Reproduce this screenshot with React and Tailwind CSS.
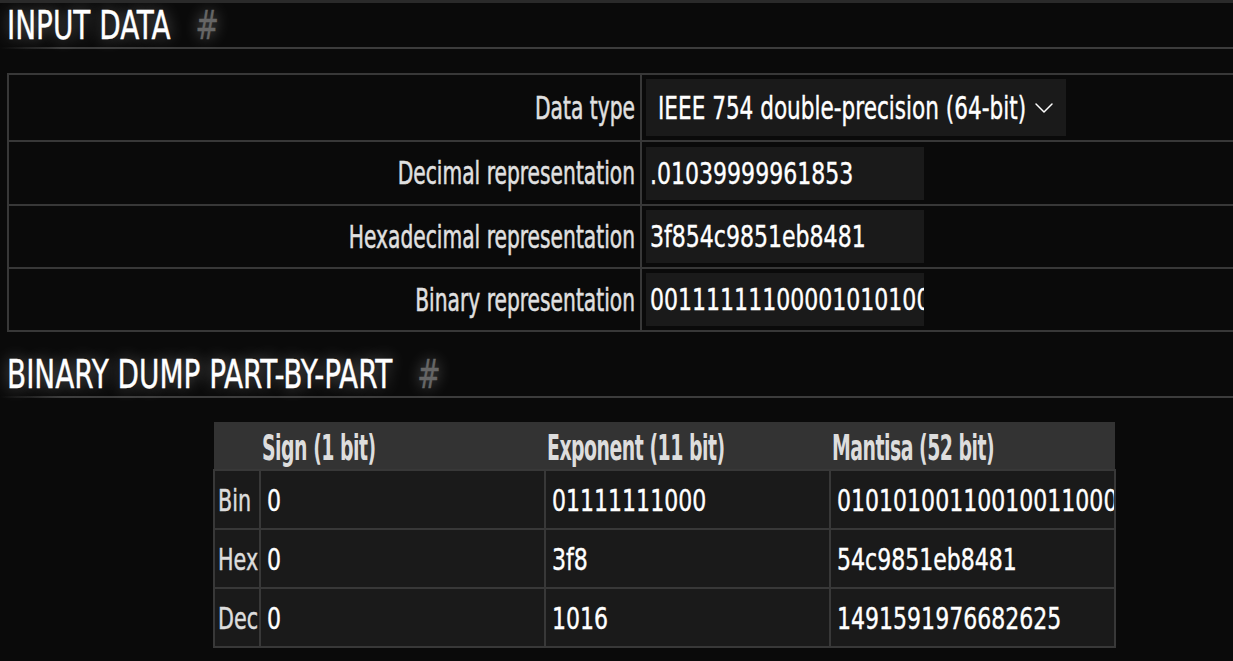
import { ChevronDown } from 'lucide-react';

const inputRows = [
    { label: 'Decimal representation', value: '.01039999961853', h: 'h-[64px]' },
    { label: 'Hexadecimal representation', value: '3f854c9851eb8481', h: 'h-[63px]' },
    { label: 'Binary representation', value: '0011111110000101010011001001100001010001111010111000010010000001', h: 'h-[63px]' },
];

const dumpRows = [
    { label: 'Bin', sign: '0', exponent: '01111111000', mantisa: '0101010011001001100001010001111010111000010010000001' },
    { label: 'Hex', sign: '0', exponent: '3f8', mantisa: '54c9851eb8481' },
    { label: 'Dec', sign: '0', exponent: '1016', mantisa: '1491591976682625' },
];

// condensed display face is missing, so the text is stretched upwards instead
const Tall = ({ children, className = '' }) => (
    <span className={`inline-block whitespace-nowrap ${className}`}>{children}</span>
);

const SectionHeading = ({ title }) => (
    <div>
        <h2 className="h-[44px] pl-[7px] flex items-center text-[31px] leading-none text-white font-normal [text-shadow:0_0_14px_rgba(255,255,255,0.4)] [-webkit-text-stroke:0.3px]">
            <Tall className="[transform:scaleY(1.28)]">{title}</Tall>
            <Tall className="ml-[25px] [transform:scaleY(1.28)] text-[#666]">#</Tall>
        </h2>
        <div className="h-[2px] bg-linear-to-r from-transparent to-[#3c3c3c] to-[5%]" />
    </div>
);

const App = () => {
    return (
        <div className="min-h-screen overflow-hidden bg-[#0a0a0a] border-t-[3px] border-[#2a2a2a] font-['DejaVu_Sans_Condensed','DejaVu_Sans',sans-serif]">
            <SectionHeading title="INPUT DATA" />

            <table className="ml-[7px] mt-[24px] w-[1240px] border-collapse">
                <tbody>
                    <tr className="h-[67px]">
                        <td className="w-[633px] border-2 border-[#383838] pr-[5px] text-right text-[22.5px] text-[#e0e0e0] [-webkit-text-stroke:0.35px]">
                            <Tall className="[transform:translateY(1px)_scaleY(1.4)]">Data type</Tall>
                        </td>
                        <td className="border-2 border-[#383838] px-[4px]">
                            <div className="w-[420px] h-[57px] bg-[#1a1a1a] flex items-center justify-between pl-3 pr-[6px] text-[24px] text-white [-webkit-text-stroke:0.3px]">
                                <Tall className="[transform:translateY(1px)_scaleY(1.3)]">IEEE 754 double-precision (64-bit)</Tall>
                                <ChevronDown className="w-8 h-8 text-white" strokeWidth={1.1} />
                            </div>
                        </td>
                    </tr>
                    {inputRows.map((row) => (
                        <tr key={row.label} className={row.h}>
                            <td className="w-[633px] border-2 border-[#383838] pr-[5px] text-right text-[22.5px] text-[#e0e0e0] [-webkit-text-stroke:0.35px]">
                                <Tall className="[transform:translateY(1px)_scaleY(1.4)]">{row.label}</Tall>
                            </td>
                            <td className="border-2 border-[#383838] px-[4px]">
                                <div className="w-[278px] h-[53px] bg-[#1a1a1a] pl-[4px] flex items-center overflow-hidden text-[24.5px] text-white [-webkit-text-stroke:0.3px]">
                                    <Tall className="[transform:translateY(1px)_scaleY(1.25)]">{row.value}</Tall>
                                </div>
                            </td>
                        </tr>
                    ))}
                </tbody>
            </table>

            <div className="mt-[20px]">
                <SectionHeading title="BINARY DUMP PART-BY-PART" />
            </div>

            <table className="ml-[213px] mt-[24px] w-[901px] table-fixed border-collapse">
                <thead>
                    <tr className="h-[48px] bg-[#333]">
                        <th className="w-[46px]" />
                        {['Sign (1 bit)', 'Exponent (11 bit)', 'Mantisa (52 bit)'].map((h) => (
                            <th key={h} className="w-[285px] pl-[2px] text-left text-[21px] font-bold tracking-[-0.5px] text-[#ddd]">
                                <Tall className="[transform:translateY(4px)_scaleY(1.7)]">{h}</Tall>
                            </th>
                        ))}
                    </tr>
                </thead>
                <tbody>
                    {dumpRows.map((row) => (
                        <tr key={row.label} className="h-[59px] bg-[#1a1a1a]">
                            <td className="border-2 border-[#383838] pl-[3px] text-[23px] text-[#ddd] overflow-hidden [-webkit-text-stroke:0.35px]">
                                <Tall className="[transform:translateY(2px)_scaleY(1.3)]">{row.label}</Tall>
                            </td>
                            {[row.sign, row.exponent, row.mantisa].map((v, i) => (
                                <td key={i} className="border-2 border-[#383838] pl-[6px] text-[24.5px] text-white overflow-hidden [-webkit-text-stroke:0.3px]">
                                    <Tall className="[transform:translateY(2px)_scaleY(1.25)]">{v}</Tall>
                                </td>
                            ))}
                        </tr>
                    ))}
                </tbody>
            </table>
        </div>
    );
};

export default App;
